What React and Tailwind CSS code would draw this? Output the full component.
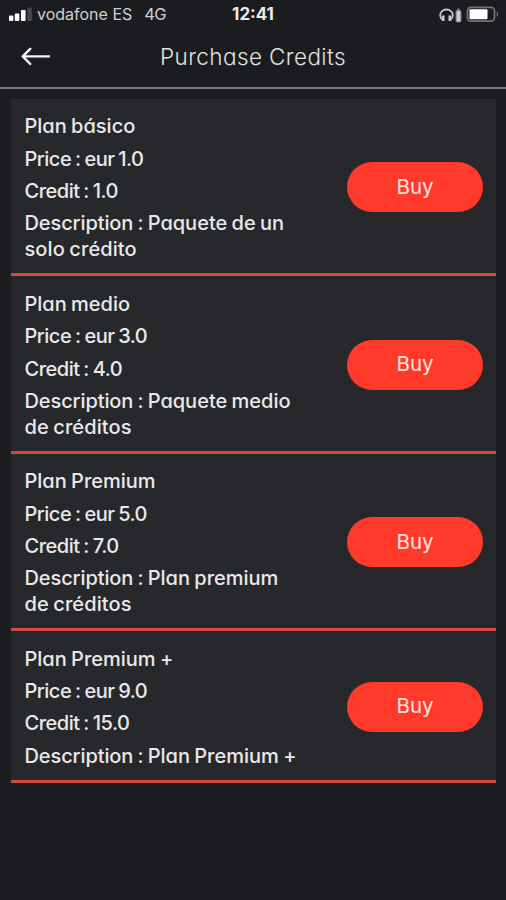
const plans = [
  { name: "Plan básico", price: "1.0", credit: "1.0", description: ["Paquete de un", "solo crédito"] },
  { name: "Plan medio", price: "3.0", credit: "4.0", description: ["Paquete medio", "de créditos"] },
  { name: "Plan Premium", price: "5.0", credit: "7.0", description: ["Plan premium", "de créditos"] },
  { name: "Plan Premium +", price: "9.0", credit: "15.0", description: ["Plan Premium +"] },
];

function StatusBar() {
  return (
    <div className="grid h-7 grid-cols-[1fr_auto_1fr] items-center pt-px text-[17px] leading-none text-[#cfcfd1]">
      <div className="flex items-center pl-[9px]">
        <svg className="shrink-0" width="24" height="15" viewBox="0 0 24 15">
          <rect x="0" y="8.5" width="4.4" height="5.5" rx="1" fill="#fff" />
          <rect x="5.8" y="6.5" width="4.6" height="7.5" rx="1" fill="#fff" />
          <rect x="12" y="3" width="4.6" height="11" rx="1" fill="#fff" />
          <rect x="18.3" y="0.5" width="4.6" height="13.5" rx="1" fill="#48484b" />
        </svg>
        <span className="ml-1 pb-px text-[16px]">vodafone ES</span>
        <span className="ml-3 text-[16.5px] tracking-[-0.6px]">4G</span>
      </div>
      <span className="font-bold text-[#ececee]">12:41</span>
      <div className="flex items-center justify-end pr-1.5">
        <svg width="62" height="18" viewBox="0 0 62 18" fill="none">
          <path d="M4.8 14C2.8 12.5 2.2 11 2.2 9.4C2.2 5.9 5 3.5 8.5 3.5S14.8 5.9 14.8 9.4C14.8 11 14.2 12.5 12.2 14" stroke="#c9c9cb" strokeWidth="1.8" />
          <path d="M5.2 9.5V15M11.8 9.5V15" stroke="#c9c9cb" strokeWidth="2.6" />
          <rect x="18" y="4.5" width="5" height="11.5" rx="1" fill="#c9c9cb" stroke="#747476" />
          <rect x="19.4" y="2.5" width="2.2" height="2" fill="#919193" />
          <rect x="29.5" y="1.3" width="27" height="13.8" rx="3.5" stroke="#747477" strokeWidth="1.8" />
          <rect x="31.5" y="3.2" width="18" height="10" rx="1" fill="#fff" />
          <path d="M58.7 5.7C60.6 6.5 60.6 10 58.7 10.8Z" fill="#747477" />
        </svg>
      </div>
    </div>
  );
}

function Header() {
  return (
    <header className="relative flex h-[61px] items-center justify-center border-b-2 border-[#77777a]">
      <svg className="absolute left-[21px] top-[18px]" width="30" height="20" viewBox="0 0 30 20" fill="none" stroke="#f4f4f5" strokeWidth="2.4" strokeLinecap="round" strokeLinejoin="round">
        <path d="M28 10.4H2M9.3 2.8L1.7 10.4L9.3 18" />
      </svg>
      <h1 className="text-[22.5px] font-light leading-none tracking-[0.4px] text-[#e2e2e3]">Purchase Credits</h1>
    </header>
  );
}

function Plan({ plan }) {
  return (
    <li className="flex items-center justify-between border-b-[3px] border-[#d9453f] bg-[#27282c] pl-[13.5px] pr-[13px]">
      <div className="flex flex-col gap-[6.4px] whitespace-nowrap pb-[11px] pt-[14.3px] text-[20px] font-medium leading-[26px] text-[#e9e9ea] [word-spacing:-1px]">
        <p>{plan.name}</p>
        <p className="tracking-[-0.5px]">Price : eur {plan.price}</p>
        <p className="tracking-[-0.5px]">Credit : {plan.credit}</p>
        <p>
          <span className="tracking-[-0.1px]">Description : </span>
          {plan.description[0]}
          {plan.description[1] && <span className="block tracking-[0.1px]">{plan.description[1]}</span>}
        </p>
      </div>
      <button className="mt-0.5 h-[50px] w-[136px] shrink-0 rounded-full bg-[#ff3a2b] text-[20.5px] leading-none text-[#ffe4e1]">Buy</button>
    </li>
  );
}

export default function App() {
  return (
    <div className="h-[900px] w-[506px] overflow-hidden bg-[#1b1c20] font-['Inter',sans-serif]">
      <StatusBar />
      <div className="[font-feature-settings:'cv11']">
        <Header />
        <ul className="ml-[11px] mr-2.5 mt-2.5">
          {plans.map((plan) => (
            <Plan key={plan.name} plan={plan} />
          ))}
        </ul>
      </div>
    </div>
  );
}
